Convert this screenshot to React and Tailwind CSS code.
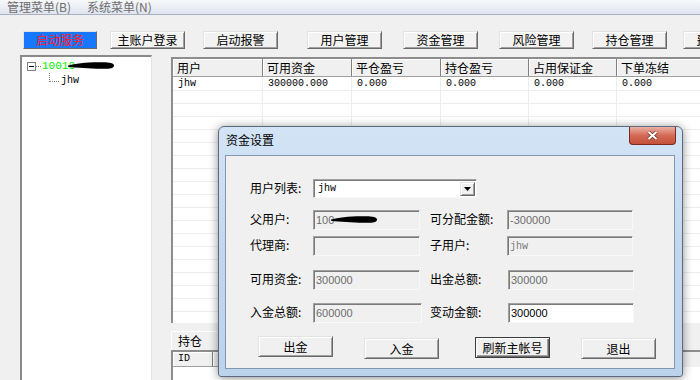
import React from 'react';

const gridCols = [
  { w: 'w-[90px]', t: '用户', v: 'jhw' },
  { w: 'w-[89px]', t: '可用资金', v: '300000.000' },
  { w: 'w-[89px]', t: '平仓盈亏', v: '0.000' },
  { w: 'w-[88px]', t: '持仓盈亏', v: '0.000' },
  { w: 'w-[88px]', t: '占用保证金', v: '0.000' },
  { w: 'w-[120px]', t: '下单冻结', v: '0.000' },
];

const rows = Array.from({ length: 19 }, (_, i) => i);

const ToolBtn = ({ children, className = '' }) => (
  <div
    className={`shrink-0 w-[75px] h-[18px] flex items-center justify-center bg-[#f2f2f2] border border-t-[#e3e3e3] border-l-[#e3e3e3] border-r-[#696969] border-b-[#696969] shadow-[inset_1px_1px_0_#ffffff,inset_-1px_-1px_0_#a0a0a0] text-[12px] leading-none text-black ${className}`}
  >
    {children}
  </div>
);

const DlgBtn = ({ children, className = '' }) => (
  <div
    className={`shrink-0 w-[75px] h-[21px] flex items-center justify-center bg-[#f0f0f0] border border-t-[#e3e3e3] border-l-[#e3e3e3] border-r-[#696969] border-b-[#696969] shadow-[inset_1px_1px_0_#ffffff,inset_-1px_-1px_0_#a0a0a0] text-[12px] leading-none text-black ${className}`}
  >
    {children}
  </div>
);

const Label = ({ children, className = '' }) => (
  <div className={`shrink-0 pt-[2px] text-[12px] leading-[14px] text-black ${className}`}>{children}</div>
);

const Field = ({ children, className = '' }) => (
  <div
    className={`shrink-0 h-[20px] flex items-center pl-[2px] border border-t-[#a0a0a0] border-l-[#a0a0a0] border-r-[#f8f8f8] border-b-[#f8f8f8] shadow-[inset_1px_1px_0_#7a7a7a] text-[11px] font-['Liberation_Sans',sans-serif] ${className}`}
  >
    {children}
  </div>
);

// black marker stroke used to hide account numbers
const Blob = ({ className = '' }) => (
  <svg className={className} width="48" height="9" viewBox="0 0 48 9">
    <path d="M1 4.5 C 8 2.5, 20 1, 34 1.2 C 42 1, 47 2, 47 4.5 C 47 7.5, 42 8, 34 7.8 C 22 7.5, 10 7, 1 5.8 Z" fill="#000" />
  </svg>
);

export default function App() {
  return (
    <div className="relative w-[700px] h-[380px] overflow-hidden bg-[#f0f0f0] font-['Noto_Sans_CJK_SC','Liberation_Sans',sans-serif] text-black">
      {/* menu bar */}
      <div className="h-[15px] flex items-center gap-[16px] pl-[7px] bg-gradient-to-b from-[#f7f8fa] to-[#dfe4ef] border-b border-b-[#a9b0c6] text-[12px] leading-[14px] text-[#6d6d6d]">
        <span>管理菜单(B)</span>
        <span>系统菜单(N)</span>
      </div>

      {/* toolbar */}
      <div className="flex pt-[16px]">
        <div className="shrink-0 ml-[23px] w-[74px] h-[18px] flex items-center justify-center bg-[#1777ff] border border-t-[#e3e3e3] border-l-[#e3e3e3] border-r-[#696969] border-b-[#696969] text-[12px] leading-none text-[#ff1a1a]">
          启动服务
        </div>
        <ToolBtn className="ml-[13px]">主账户登录</ToolBtn>
        <ToolBtn className="ml-[18px]">启动报警</ToolBtn>
        <ToolBtn className="ml-[29px]">用户管理</ToolBtn>
        <ToolBtn className="ml-[21px]">资金管理</ToolBtn>
        <ToolBtn className="ml-[21px]">风险管理</ToolBtn>
        <ToolBtn className="ml-[18px]">持仓管理</ToolBtn>
        <ToolBtn className="ml-[16px]">费用管理</ToolBtn>
      </div>

      {/* main area */}
      <div className="flex mt-[6px] h-[330px]">
        {/* tree */}
        <div className="shrink-0 ml-[20px] w-[132px] bg-white border-t-2 border-l-2 border-r border-t-[#8a8a8a] border-l-[#8a8a8a] border-r-[#e3e3e3]">
          <div className="relative flex items-center h-[16px] mt-[1px] pl-[5px]">
            <div className="w-[9px] h-[9px] border border-[#808080] flex items-center justify-center">
              <div className="w-[5px] h-px bg-black" />
            </div>
            <div className="w-[5px] border-t border-dotted border-t-[#808080]" />
            <span className="ml-[1px] text-[11px] leading-none font-['Liberation_Mono',monospace] text-[#00f000]">10018</span>
            <Blob className="absolute left-[45px] top-[3px]" />
          </div>
          <div className="flex items-end h-[10px] -mt-[2px]">
            <div className="ml-[27px] w-[10px] h-[9px] border-l border-b border-dotted border-l-[#808080] border-b-[#808080]" />
            <span className="ml-[2px] text-[10px] leading-none font-['Liberation_Mono',monospace] translate-y-[4px]">jhw</span>
          </div>
        </div>

        {/* right side */}
        <div className="flex-1 min-w-0 ml-[19px] mt-[2px] flex flex-col">
          <div className="h-[266px] shrink-0 bg-white overflow-hidden border-t-2 border-l-2 border-t-[#8d8d8d] border-l-[#8d8d8d]">
            <div className="flex h-[18px] bg-[#f0f0f0] border-b border-b-[#a0a0a0]">
              {gridCols.map((c) => (
                <div
                  key={c.t}
                  className={`${c.w} shrink-0 pl-[4px] border-r border-r-[#808080] shadow-[inset_1px_1px_0_#ffffff] text-[12px] leading-[17px]`}
                >
                  {c.t}
                </div>
              ))}
            </div>
            {rows.map((r) => (
              <div key={r} className={`flex border-b border-b-[#ededed] ${r === 0 ? 'h-[14px]' : 'h-[13px]'}`}>
                {gridCols.map((c) => (
                  <div
                    key={c.t}
                    className={`${c.w} shrink-0 pl-[5px] border-r border-r-[#ededed] text-[10px] leading-[13px] font-['Liberation_Mono',monospace]`}
                  >
                    {r === 0 ? c.v : ''}
                  </div>
                ))}
              </div>
            ))}
          </div>

          {/* tab */}
          <div className="mt-[8px] flex">
            <div className="w-[48px] h-[19px] pl-[6px] bg-[#f0f0f0] border-t border-l border-r border-t-white border-l-white border-r-[#a0a0a0] text-[12px] leading-[18px]">
              持仓
            </div>
          </div>
          <div className="flex-1 bg-white border-t-2 border-l-2 border-t-[#8d8d8d] border-l-[#8d8d8d]">
            <div className="flex h-[15px] bg-[#f0f0f0]">
              <div className="w-[40px] pl-[5px] border-r border-b border-r-[#808080] border-b-[#a0a0a0] shadow-[inset_1px_1px_0_#ffffff] text-[10px] leading-[14px] font-['Liberation_Mono',monospace]">
                ID
              </div>
              <div className="w-[80px] border-r border-b border-r-[#808080] border-b-[#a0a0a0] shadow-[inset_1px_1px_0_#ffffff]" />
            </div>
          </div>
        </div>
      </div>

      {/* dialog */}
      <div className="absolute left-[218px] top-[126px] w-[465px] h-[251px] flex flex-col rounded-t-[6px] rounded-b-[3px] border border-[#5b6a82] bg-gradient-to-b from-[#d3e4f6] via-[#c2d7ee] to-[#bcd3ec] shadow-[0_1px_10px_rgba(0,0,0,0.45)]">
        <div className="h-[28px] shrink-0 flex items-start justify-between">
          <div className="pl-[7px] pt-[6px] text-[12px] leading-[14px]">资金设置</div>
          <div className="mr-[6px] w-[47px] h-[18px] flex items-center justify-center rounded-b-[4px] border border-t-0 border-[#7a2a20] bg-gradient-to-b from-[#eab0a3] via-[#d46a55] to-[#c4503a]">
            <svg width="13" height="11" viewBox="0 0 13 11">
              <path d="M2.5 2 L10.5 9 M10.5 2 L2.5 9" stroke="#6a3028" strokeWidth="3.6" />
              <path d="M2.5 2 L10.5 9 M10.5 2 L2.5 9" stroke="#ffffff" strokeWidth="2.1" />
            </svg>
          </div>
        </div>
        <div className="flex-1 ml-[6px] mr-[7px] mb-[7px] bg-[#f0f0f0] border border-[#8497b0] flex flex-col">
          <div className="flex items-start ml-[24px] mt-[23px]">
            <Label className="w-[63px]">用户列表:</Label>
            <div className="shrink-0 w-[164px] h-[19px] flex items-center justify-between bg-white border border-t-[#a0a0a0] border-l-[#a0a0a0] border-r-[#f8f8f8] border-b-[#f8f8f8] shadow-[inset_1px_1px_0_#7a7a7a]">
              <span className="pl-[4px] text-[10px] leading-none font-['Liberation_Mono',monospace]">jhw</span>
              <div className="mr-[1px] w-[15px] h-[14px] flex items-center justify-center bg-[#f0f0f0] border border-t-[#e3e3e3] border-l-[#e3e3e3] border-r-[#696969] border-b-[#696969] shadow-[inset_1px_1px_0_#ffffff,inset_-1px_-1px_0_#a0a0a0]">
                <svg width="7" height="4" viewBox="0 0 7 4">
                  <path d="M0 0 H7 L3.5 4 Z" fill="#000" />
                </svg>
              </div>
            </div>
          </div>

          <div className="flex items-start ml-[24px] mt-[12px]">
            <Label className="w-[63px]">父用户:</Label>
            <Field className="relative w-[107px] bg-[#f0f0f0] text-[#6d6d6d]">
              100
              <Blob className="absolute left-[16px] top-[4px]" />
            </Field>
            <Label className="ml-[10px] w-[77px]">可分配金额:</Label>
            <Field className="w-[126px] bg-[#f0f0f0] text-[#6d6d6d]">-300000</Field>
          </div>

          <div className="flex items-start ml-[24px] mt-[6px]">
            <Label className="w-[63px]">代理商:</Label>
            <Field className="w-[107px] bg-[#f0f0f0]" />
            <Label className="ml-[10px] w-[77px]">子用户:</Label>
            <Field className="w-[126px] bg-[#f0f0f0] text-[#7a7a7a]">
              <span className="text-[10px] font-['Liberation_Mono',monospace]">jhw</span>
            </Field>
          </div>

          <div className="flex items-start ml-[24px] mt-[14px]">
            <Label className="w-[63px]">可用资金:</Label>
            <Field className="w-[107px] bg-[#f0f0f0] text-[#6d6d6d]">300000</Field>
            <Label className="ml-[10px] w-[78px]">出金总额:</Label>
            <Field className="w-[126px] bg-[#f0f0f0] text-[#6d6d6d]">300000</Field>
          </div>

          <div className="flex items-start ml-[24px] mt-[13px]">
            <Label className="w-[63px]">入金总额:</Label>
            <Field className="w-[109px] bg-[#f0f0f0] text-[#6d6d6d]">600000</Field>
            <Label className="ml-[8px] w-[78px]">变动金额:</Label>
            <Field className="w-[126px] bg-white text-black">300000</Field>
          </div>

          <div className="flex items-start ml-[32px] mt-[13px]">
            <DlgBtn className="w-[74px]">出金</DlgBtn>
            <DlgBtn className="ml-[31px] mt-[2px]">入金</DlgBtn>
            <div className="shrink-0 ml-[36px] mt-[1px] w-[75px] h-[21px] flex items-center justify-center bg-[#f0f0f0] border border-[#3c3c3c] shadow-[inset_1px_1px_0_#ffffff,inset_-1px_-1px_0_#696969,inset_-2px_-2px_0_#a0a0a0] text-[12px] leading-none">
              刷新主帐号
            </div>
            <DlgBtn className="ml-[31px] mt-[2px]">退出</DlgBtn>
          </div>
        </div>
      </div>
    </div>
  );
}
